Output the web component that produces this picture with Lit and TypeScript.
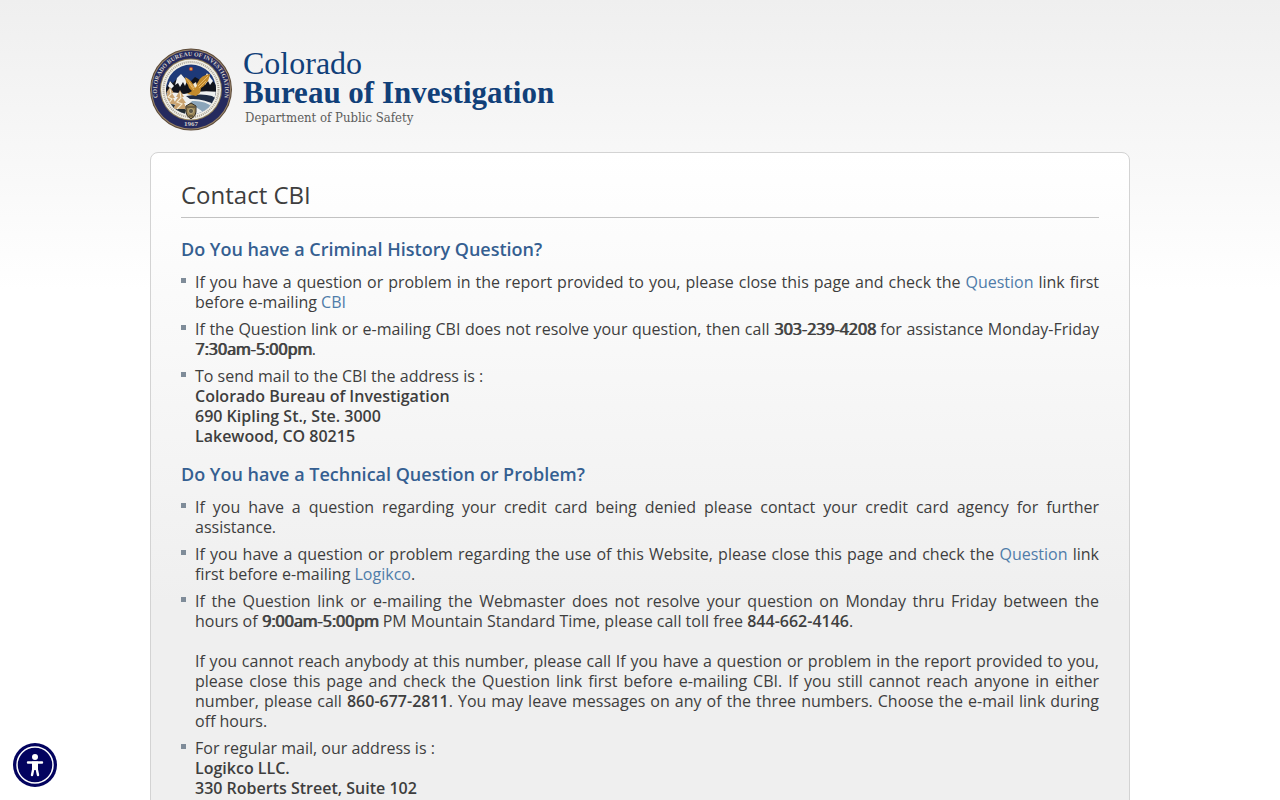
import { LitElement, html, css } from "lit";
import { customElement } from "lit/decorators.js";

@customElement("cbi-seal")
class CbiSeal extends LitElement {
  static styles = css`
    :host { display: block; width: 82px; height: 83px; flex: none; }
    svg { display: block; width: 100%; height: 100%; }
    .ring { font-family: "Liberation Serif", serif; font-size: 6px; font-weight: 700; fill: #d3cfc8; }
    .year { font-family: "Liberation Serif", serif; font-size: 7px; font-weight: 700; fill: #d3cfc8; }
  `;

  render() {
    return html`<svg viewBox="0 0 82 83" role="img" aria-label="Colorado Bureau of Investigation seal">
      <defs>
        <path id="arc" d="M8.5 52 A34 34 0 1 1 73.5 52" />
        <clipPath id="inner"><circle cx="41" cy="41.5" r="25" /></clipPath>
      </defs>
      <circle cx="41" cy="41.5" r="41" fill="#5b4938" />
      <circle cx="41" cy="41.5" r="40" fill="#97836a" />
      <circle cx="41" cy="41.5" r="39" fill="#252a5e" />
      <circle cx="41" cy="41.5" r="31" fill="#8d7c58" />
      <circle cx="41" cy="41.5" r="30" fill="#f0eee6" />
      <circle cx="41" cy="41.5" r="27.5" fill="none" stroke="#aaa498" stroke-width="2" stroke-dasharray="1 1" />
      <g clip-path="url(#inner)">
        <rect x="15" y="15" width="52" height="54" fill="#1d3978" />
        <path d="M14 44 L20 33 L23 35 L31 26 L39 35 L45 29 L52 33 L57 25 L68 40 V52 H14Z" fill="#10131c" />
        <path d="M31 26 L37 33 L35 38 L33 34 L30 39 L28 35 L25 37 L27 30Z M20 33 L24 38 L21 41 L18 38Z M57 25 L63 33 L60 37 L58 33 L55 37 L54 30Z" fill="#f0f1f2" />
        <path d="M14 46 Q24 43 34 46 Q50 42 68 44 V69 H14Z" fill="#eef0f0" />
        <path d="M36 48 Q52 45 62 48 L67 51 V58 Q54 50 40 51Z" fill="#1f2c45" />
        <path d="M14 55 Q30 56 36 62 L34 69 H14Z" fill="#222c33" />
        <path d="M42 53 Q54 52 63 59 L54 65 Q48 59 39 57Z" fill="#8ba5ba" />
        <path d="M20 39 L24 45 H22 L25 50 H23 L26 56 H14 L17 50 H15 L18 45 H16Z M30 42 L34 49 H32 L36 55 H34 L37 61 H23 L26 55 H24 L28 49 H26Z" fill="#c9a371" />
        <path d="M20 41 L21 46 L18 49 L22 51 L18 56 M30 44 L31 50 L27 54 L32 56 L27 61" fill="none" stroke="#f5ead0" stroke-width="1.2" />
      </g>
      <path d="M35 29 Q40 31 43 36 L45 39 L48 34 Q51 27 60 26 L59 30 L58 33 L56 35 L54 38 L51 40 L50 45 L46 48 L37 46 L42 43 L39 40 L38 37 L36 34Z" fill="#c28a2c" />
      <path d="M36 30 L44 40 M39 35 L44 42 M48 38 L58 28 M49 40 L56 33" fill="none" stroke="#e5b765" stroke-width="1" />
      <path d="M43 36 L46 34 L47 38 L45 40Z" fill="#f4ecd8" />
      <circle cx="41" cy="21" r="2" fill="#c14c33" /><circle cx="41" cy="21" r="1" fill="#e9bd53" />
      <path d="M36 58 L41 55 L46 58 V64 Q46 68 41 71 Q36 68 36 64Z" fill="#978254" stroke="#363027" stroke-width="1" />
      <circle cx="41" cy="63" r="2.6" fill="#5c5748" stroke="#c8b785" stroke-width="0.8" />
      <path d="M37 59 H45 M39 68 H43" stroke="#403c32" stroke-width="1" />
      <text class="ring"><textPath href="#arc" startOffset="50%" text-anchor="middle">COLORADO BUREAU OF INVESTIGATION</textPath></text>
      <text class="year" x="41" y="78" text-anchor="middle">1967</text>
    </svg>`;
  }
}

@customElement("app-root")
class AppRoot extends LitElement {
  static styles = css`
    :host {
      display: block;
      min-height: 100vh;
      box-sizing: border-box;
      font: 16px/20px "Open Sans", sans-serif;
      color: #3e3e3e;
      background: #fff linear-gradient(#efefef, #fff) no-repeat 0 0 / 100% 290px;
    }
    .page { max-width: 980px; margin: 0 auto; padding-top: 48px; }
    .brand { display: flex; gap: 11px; margin-bottom: 21px; color: #114079; text-decoration: none; font-family: "Liberation Serif", serif; }
    .name { display: flex; flex-direction: column; }
    .state { font-size: 32px; line-height: 30px; }
    .bureau { font-size: 31px; line-height: 30px; font-weight: 700; }
    .dept { font: 13px/20px "DejaVu Serif Condensed", "DejaVu Serif", serif; color: #5c5c5c; padding-left: 2px; }
    .card {
      border: 1px solid #d3d3d3;
      border-radius: 8px;
      padding: 24px 30px 30px;
      background: #efefef linear-gradient(#fff, #efefef) no-repeat 0 0 / 100% 450px;
    }
    h1 { margin: 0 0 21px; padding-bottom: 4px; border-bottom: 1px solid #c2c2c2; font-size: 24px; line-height: 36px; font-weight: 400; }
    h2 { margin: 0 0 13px; font-size: 18px; line-height: 20px; font-weight: 600; color: #355f91; }
    ul { list-style: none; margin: 0 0 18px; padding: 0; display: flex; flex-direction: column; gap: 7px; }
    li { padding-left: 14px; text-align: justify; background: linear-gradient(#7f8c99, #7f8c99) no-repeat 0 6px / 5px 5px; }
    p { margin: 0 0 20px; }
    p:last-child { margin-bottom: 0; }
    a { color: #4f7ca9; text-decoration: none; }
    strong { font-weight: 600; }
    .smear { font-weight: 400; text-shadow: 1px 0 0 currentColor; }
    address { font-style: normal; font-weight: 600; }
    .access {
      position: fixed; left: 13px; bottom: 13px; width: 44px; height: 44px;
      padding: 0; border: 0; border-radius: 50%; background: none; cursor: pointer;
    }
    .access svg { display: block; width: 100%; height: 100%; }
  `;

  render() {
    return html`
      <div class="page">
        <a class="brand" href="#">
          <cbi-seal></cbi-seal>
          <span class="name">
            <span class="state">Colorado</span>
            <span class="bureau">Bureau of Investigation</span>
            <span class="dept">Department of Public Safety</span>
          </span>
        </a>
        <main class="card">
          <h1>Contact CBI</h1>
          <section>
            <h2>Do You have a Criminal History Question?</h2>
            <ul>
              <li>If you have a question or problem in the report provided to you, please close this page and check the <a href="#">Question</a> link first before e-mailing <a href="#">CBI</a></li>
              <li>If the Question link or e-mailing CBI does not resolve your question, then call <strong class="smear">303-239-4208</strong> for assistance Monday-Friday <strong class="smear">7:30am-5:00pm</strong>.</li>
              <li>To send mail to the CBI the address is :
                <address>Colorado Bureau of Investigation<br />690 Kipling St., Ste. 3000<br />Lakewood, CO 80215</address>
              </li>
            </ul>
          </section>
          <section>
            <h2>Do You have a Technical Question or Problem?</h2>
            <ul>
              <li>If you have a question regarding your credit card being denied please contact your credit card agency for further assistance.</li>
              <li>If you have a question or problem regarding the use of this Website, please close this page and check the <a href="#">Question</a> link first before e-mailing <a href="#">Logikco</a>.</li>
              <li>
                <p>If the Question link or e-mailing the Webmaster does not resolve your question on Monday thru Friday between the hours of <strong class="smear">9:00am-5:00pm</strong> PM Mountain Standard Time, please call toll free <strong>844-662-4146</strong>.</p>
                <p>If you cannot reach anybody at this number, please call If you have a question or problem in the report provided to you, please close this page and check the Question link first before e-mailing CBI. If you still cannot reach anyone in either number, please call <strong>860-677-2811</strong>. You may leave messages on any of the three numbers. Choose the e-mail link during off hours.</p>
              </li>
              <li>For regular mail, our address is :
                <address>Logikco LLC.<br />330 Roberts Street, Suite 102</address>
              </li>
            </ul>
          </section>
        </main>
      </div>
      <button class="access" aria-label="Accessibility menu">
        <svg viewBox="0 0 44 44" aria-hidden="true">
          <circle cx="22" cy="22" r="22" fill="#03035f" />
          <circle cx="22" cy="22" r="18" fill="none" stroke="#fff" stroke-width="1.5" />
          <circle cx="22" cy="14" r="3" fill="#fff" />
          <path d="M15 19.5 H29 M20.5 25 L19 32 M23.5 25 L25 32" fill="none" stroke="#fff" stroke-width="2.4" stroke-linecap="round" />
          <path d="M19 18.5 H25 V27 H19Z" fill="#fff" />
        </svg>
      </button>
    `;
  }
}
